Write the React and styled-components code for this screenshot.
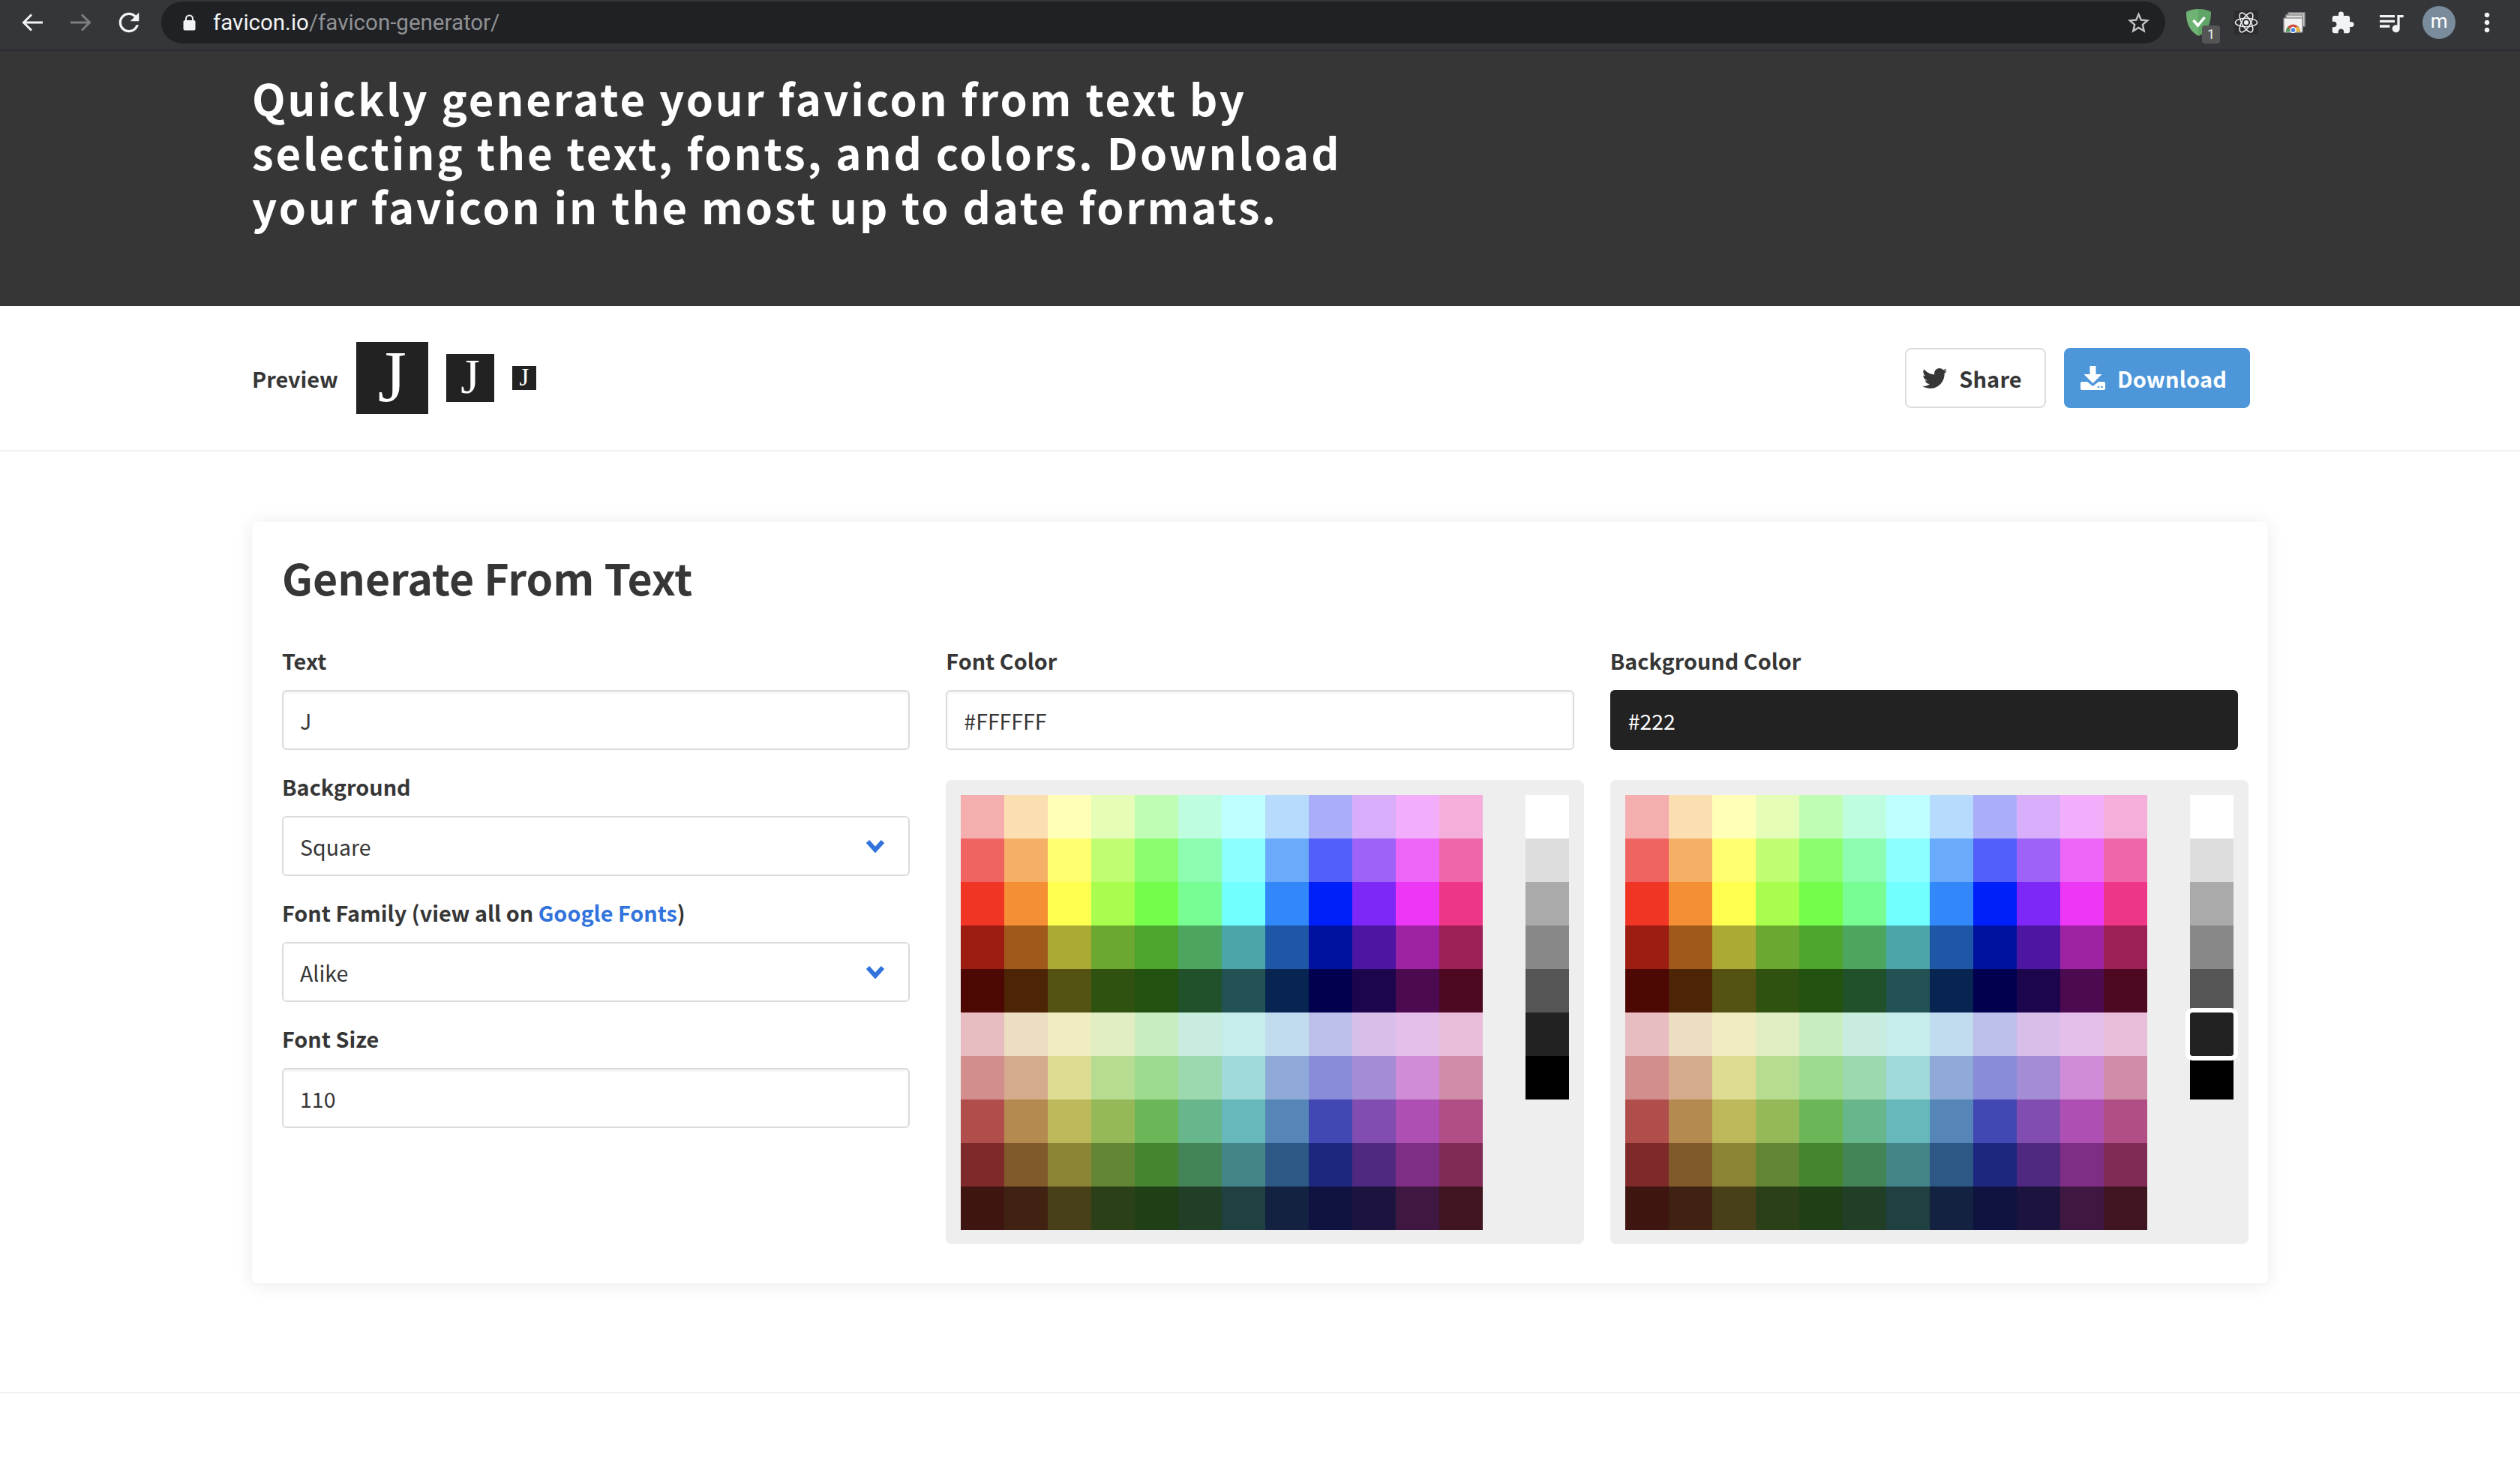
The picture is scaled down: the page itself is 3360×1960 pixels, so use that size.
import styled, { createGlobalStyle } from 'styled-components';
import { FaTwitter } from 'react-icons/fa';
import { MdExtension, MdQueueMusic, MdMoreVert, MdRefresh, MdStarBorder } from 'react-icons/md';

const GlobalStyle = createGlobalStyle`
  html, body {
    margin: 0;
    padding: 0;
    background: #fff;
  }
  body {
    font-family: "Noto Sans CJK JP", "Noto Sans", sans-serif;
    color: #363636;
  }
  * {
    box-sizing: border-box;
  }
`;

const PALETTE = [
  ['#f4aeae', '#fbdfb1', '#ffffb8', '#e6fdb8', '#c0fdb4', '#bffde0', '#bfffff', '#b6dbfd', '#aaaef9', '#d8aefb', '#f3aefb', '#f5aeda'],
  ['#ef6461', '#f5af67', '#ffff70', '#c0fd72', '#8cfd6f', '#8cfdb0', '#8cffff', '#69aafa', '#525ffa', '#9e62f7', '#ee66f7', '#ef66aa'],
  ['#f03524', '#f48f35', '#ffff4f', '#a8fd4f', '#75fd4b', '#78fd95', '#72ffff', '#3287f9', '#0020fa', '#7d28f7', '#ec37f5', '#ee3689'],
  ['#9c1c12', '#a1581d', '#aaaa34', '#6ca731', '#4ea52d', '#4ca660', '#4ba6a8', '#1e57a6', '#00119f', '#4c16a2', '#9d23a2', '#9c2056'],
  ['#4d0804', '#4d2506', '#555314', '#305211', '#225110', '#21512a', '#225253', '#082450', '#00004f', '#1c054d', '#4c0b50', '#4d0922'],
  ['#e8bdc1', '#ecdec1', '#f0edc2', '#e1eec3', '#c7edc1', '#c8ede0', '#c7ecec', '#c2dcef', '#bcbfe9', '#d8bfe9', '#e4bfe9', '#e7bdda'],
  ['#d28d8d', '#d6aa8d', '#dedc92', '#b6dc91', '#9ddb8e', '#9dd9ae', '#a0dadb', '#8faad9', '#888cd9', '#a48cd6', '#d08cd6', '#d08daa'],
  ['#b04e4b', '#b48a50', '#bdb95a', '#95b958', '#6bb757', '#68b78c', '#66b8bb', '#5586b7', '#4248b3', '#814db0', '#ae50b3', '#b04e85'],
  ['#7f2a2a', '#82592b', '#8b8635', '#628634', '#458532', '#448558', '#448587', '#2d5785', '#1c2880', '#502880', '#7f2e85', '#7e2c55'],
  ['#3f1512', '#402213', '#474018', '#2b4018', '#213f16', '#203f26', '#214041', '#132240', '#10123f', '#1c143f', '#3e1841', '#3f1520'],
];

const GRAYS = ['#ffffff', '#dddddd', '#aaaaaa', '#888888', '#555555', '#222222', '#000000'];

const Toolbar = styled.header`
  height: 68px;
  background: #35363a;
  border-bottom: 2px solid #2a2b2e;
  display: flex;
  align-items: center;
  padding-bottom: 6px;
  color: #f1f3f4;
`;

const NavGroup = styled.div`
  display: flex;
  padding-left: 11px;
  width: 215px;
  flex: none;
`;

const NavButton = styled.span`
  width: 64.5px;
  display: flex;
  justify-content: center;
  align-items: center;
  color: ${p => (p.$dim ? '#7d7e80' : '#f1f3f4')};
  flex: none;
`;

const UrlBar = styled.div`
  width: 2672px;
  height: 56px;
  flex: none;
  border-radius: 28px;
  background: #202124;
  display: flex;
  align-items: center;
  padding: 0 18px 0 29px;
  font-size: 29.5px;
  font-family: "Roboto", sans-serif;
`;

const UrlHost = styled.span`
  color: #f1f3f4;
  margin-left: 23px;
`;

const UrlPath = styled.span`
  color: #8f9194;
  flex: 1;
`;

const ExtensionTray = styled.div`
  flex: 1;
  display: flex;
  align-items: center;
  padding-left: 12px;
`;

const ExtSlot = styled.span`
  width: 64.2px;
  flex: none;
  height: 60px;
  display: flex;
  align-items: center;
  justify-content: center;
  position: relative;
  color: #f1f3f4;
`;

const Badge = styled.span`
  position: absolute;
  left: 37px;
  top: 34px;
  width: 24px;
  height: 24px;
  border-radius: 4px;
  background: #555;
  color: #eee;
  font: 18px/24px "Roboto", sans-serif;
  text-align: center;
`;

const Avatar = styled.span`
  width: 44px;
  height: 44px;
  border-radius: 50%;
  background: #7a8c9b;
  color: #fff;
  font: 26px/40px "Roboto", sans-serif;
  text-align: center;
`;

const Hero = styled.section`
  height: 340px;
  background: #363636;
  padding: 26px 336px 0;
`;

const Headline = styled.h1`
  width: 1500px;
  margin: 0;
  color: #fff;
  font-size: 58px;
  line-height: 72px;
  font-weight: 700;
  letter-spacing: 2.85px;
`;

const PreviewBar = styled.section`
  height: 194px;
  border-bottom: 2px solid #f1f1f1;
  display: flex;
  align-items: center;
  padding: 0 360px 0 336px;
`;

const PreviewLabel = styled.span`
  font-size: 28.8px;
  font-weight: 700;
  margin-right: 24px;
`;

const PreviewIcon = styled.span`
  width: ${p => p.$size}px;
  height: ${p => p.$size}px;
  margin-right: 24px;
  background: #222;
  color: #fff;
  font-family: "Liberation Serif", serif;
  font-size: ${p => p.$size * 1.02}px;
  line-height: ${p => p.$size * 0.96}px;
  text-align: center;
  flex: none;
`;

const Spacer = styled.div`
  flex: 1;
`;

const Button = styled.button`
  height: 80px;
  width: ${p => p.$width}px;
  margin-left: 24px;
  padding: 0 9px 0 0;
  display: flex;
  align-items: center;
  justify-content: center;
  gap: 16px;
  border-radius: 8px;
  font-family: inherit;
  font-size: 29px;
  font-weight: 700;
  letter-spacing: 0.15px;
  color: ${p => (p.$primary ? '#fff' : '#363636')};
  background: ${p => (p.$primary ? '#4d96d9' : '#fff')};
  border: 2px solid ${p => (p.$primary ? '#4d96d9' : '#ddd')};
`;

const Main = styled.main`
  padding: 94px 336px 0;
  height: 1256px;
  border-bottom: 2px solid #f1f1f1;
`;

const Card = styled.section`
  height: 1015px;
  border-radius: 8px;
  background: #fff;
  box-shadow: 0 2px 24px rgba(0, 0, 0, 0.09);
  padding: 40px;
`;

const CardTitle = styled.h2`
  margin: 0 0 59px;
  height: 66px;
  font-size: 57.2px;
  line-height: 66px;
  font-weight: 700;
`;

const Columns = styled.div`
  display: grid;
  grid-template-columns: repeat(3, minmax(0, 1fr));
  column-gap: 48px;
`;

const Field = styled.div`
  margin-bottom: 29px;
`;

const Label = styled.div`
  height: 40px;
  margin-bottom: 19px;
  font-size: 28.8px;
  line-height: 40px;
  font-weight: 700;
`;

const GoogleLink = styled.span`
  color: #3273dc;
`;

const Box = styled.div`
  height: 80px;
  border-radius: 6px;
  border: 2px solid ${p => (p.$bg ? p.$bg : '#dbdbdb')};
  background: ${p => p.$bg || '#fff'};
  color: ${p => (p.$bg ? '#fff' : '#363636')};
  padding: 0 ${p => (p.$select ? '31px' : '22px')} 0 22px;
  display: flex;
  align-items: center;
  justify-content: space-between;
  font-size: 28.5px;
  box-shadow: ${p => (p.$select || p.$bg ? 'none' : 'inset 0 2px 3px rgba(10, 10, 10, 0.06)')};
`;

const Picker = styled.div`
  width: 851px;
  height: 619px;
  margin-top: 40px;
  padding: 20px;
  border-radius: 8px;
  background: #eee;
  display: flex;
  justify-content: space-between;
`;

const SwatchGrid = styled.div`
  display: grid;
  grid-template-columns: repeat(12, 58px);
  grid-auto-rows: 58px;
`;

const GrayColumn = styled.div`
  display: grid;
  grid-template-columns: 58px;
  grid-auto-rows: 58px;
`;

const Swatch = styled.div`
  background: ${p => p.$color};
  position: relative;
  ${p => (p.$selected ? `
    outline: 6px solid #fff;
    border-radius: 3px;
    z-index: 1;
  ` : '')}
`;

const ColorPicker = ({ selected }) => (
  <Picker>
    <SwatchGrid>
      {PALETTE.flat().map((color, i) => (
        <Swatch key={i} $color={color} />
      ))}
    </SwatchGrid>
    <GrayColumn>
      {GRAYS.map(color => (
        <Swatch key={color} $color={color} $selected={color === selected} />
      ))}
    </GrayColumn>
  </Picker>
);

const BackArrow = () => (
  <svg width="28" height="24" viewBox="0 0 28 24">
    <path d="M28 12H3M13 1.500L2.500 12 13 22.500" fill="none" stroke="currentColor" strokeWidth="3" />
  </svg>
);

const ForwardArrow = () => (
  <svg width="28" height="24" viewBox="0 0 28 24">
    <path d="M0 12h25M15 1.500L25.500 12 15 22.500" fill="none" stroke="currentColor" strokeWidth="3" />
  </svg>
);

const LockIcon = () => (
  <svg width="17" height="22" viewBox="0 0 17 22">
    <path d="M4 9V6a4.500 4.500 0 0 1 9 0v3" fill="none" stroke="#f1f3f4" strokeWidth="2" />
    <rect x="0.500" y="8" width="16" height="13.500" rx="2" fill="#f1f3f4" />
  </svg>
);

const AdGuardIcon = () => (
  <svg width="33" height="36" viewBox="0 0 33 36">
    <defs>
      <linearGradient id="guard" x1="0" x2="1" y1="0" y2="0">
        <stop offset="0.5" stopColor="#6fb474" />
        <stop offset="0.5" stopColor="#5fa565" />
      </linearGradient>
    </defs>
    <path d="M16.500 0C10 0 4.500 1.500 0 4c0 13 3 25 16.500 32C30 29 33 17 33 4 28.500 1.500 23 0 16.500 0z" fill="url(#guard)" />
    <path d="M9.500 15l6 7 9-11" fill="none" stroke="#fff" strokeWidth="3.500" />
  </svg>
);

const ReactIcon = () => (
  <svg width="32" height="32" viewBox="-16 -16 32 32" style={{ background: '#2c2c30' }}>
    <g fill="none" stroke="#f1f3f4" strokeWidth="1.500">
      <ellipse rx="14.500" ry="5.800" />
      <ellipse rx="14.500" ry="5.800" transform="rotate(60)" />
      <ellipse rx="14.500" ry="5.800" transform="rotate(120)" />
    </g>
    <circle r="3" fill="#f1f3f4" />
  </svg>
);

const WebStoreIcon = () => (
  <svg width="30" height="28" viewBox="0 0 30 28">
    <rect x="7" y="1" width="22" height="18" fill="#c9c9c9" stroke="#8f8f8f" strokeWidth="1.500" />
    <rect x="4" y="4" width="22" height="18" fill="#dedede" stroke="#8f8f8f" strokeWidth="1.500" />
    <rect x="1" y="8" width="25" height="19" rx="1" fill="#f2f2f2" stroke="#8f8f8f" strokeWidth="1.500" />
    <path d="M4 26a9.500 9.500 0 0 1 19 0z" fill="#cf4a3c" />
    <path d="M4 26a9.500 9.500 0 0 1 2.500-6.500l4 6.500z" fill="#4b9e58" />
    <path d="M14 26l4.500-7a9.500 9.500 0 0 1 4.500 7z" fill="#e5b93f" />
    <circle cx="13.500" cy="24" r="3.500" fill="#4a83e0" stroke="#fff" strokeWidth="1.300" />
  </svg>
);

const DownloadIcon = () => (
  <svg width="33" height="32" viewBox="0 0 33 32">
    <path d="M12.500 0h8v11h8L16.500 23 4.500 11h8z" fill="#fff" />
    <path d="M2 21h7l7.500 6 7.500-6h7a2 2 0 0 1 2 2v7a2 2 0 0 1-2 2H2a2 2 0 0 1-2-2v-7a2 2 0 0 1 2-2z" fill="#fff" />
    <circle cx="24" cy="28" r="1.300" fill="#4d96d9" />
    <circle cx="28.500" cy="28" r="1.300" fill="#4d96d9" />
  </svg>
);

const Chevron = () => (
  <svg width="26" height="18" viewBox="0 0 26 18">
    <path d="M3 3l10 11L23 3" fill="none" stroke="#3273dc" strokeWidth="6" />
  </svg>
);

const App = () => (
  <>
    <GlobalStyle />
    <Toolbar>
      <NavGroup>
        <NavButton><BackArrow /></NavButton>
        <NavButton $dim><ForwardArrow /></NavButton>
        <NavButton><MdRefresh size={40} /></NavButton>
      </NavGroup>
      <UrlBar>
        <LockIcon />
        <UrlHost>favicon.io</UrlHost>
        <UrlPath>/favicon-generator/</UrlPath>
        <MdStarBorder size={35} color="#c4c5c7" />
      </UrlBar>
      <ExtensionTray>
        <ExtSlot><AdGuardIcon /><Badge>1</Badge></ExtSlot>
        <ExtSlot><ReactIcon /></ExtSlot>
        <ExtSlot><WebStoreIcon /></ExtSlot>
        <ExtSlot><MdExtension size={33} /></ExtSlot>
        <ExtSlot><MdQueueMusic size={40} /></ExtSlot>
        <ExtSlot><Avatar>m</Avatar></ExtSlot>
        <ExtSlot><MdMoreVert size={40} /></ExtSlot>
      </ExtensionTray>
    </Toolbar>
    <Hero>
      <Headline>
        Quickly generate your favicon from text by selecting the text, fonts, and colors. Download your favicon in the most up to date formats.
      </Headline>
    </Hero>
    <PreviewBar>
      <PreviewLabel>Preview</PreviewLabel>
      <PreviewIcon $size={96}>J</PreviewIcon>
      <PreviewIcon $size={64}>J</PreviewIcon>
      <PreviewIcon $size={32}>J</PreviewIcon>
      <Spacer />
      <Button $width={188}><FaTwitter size={33} />Share</Button>
      <Button $width={248} $primary><DownloadIcon />Download</Button>
    </PreviewBar>
    <Main>
      <Card>
        <CardTitle>Generate From Text</CardTitle>
        <Columns>
          <div>
            <Field>
              <Label>Text</Label>
              <Box>J</Box>
            </Field>
            <Field>
              <Label>Background</Label>
              <Box $select>Square<Chevron /></Box>
            </Field>
            <Field>
              <Label>Font Family (view all on <GoogleLink>Google Fonts</GoogleLink>)</Label>
              <Box $select>Alike<Chevron /></Box>
            </Field>
            <Field>
              <Label>Font Size</Label>
              <Box>110</Box>
            </Field>
          </div>
          <div>
            <Label>Font Color</Label>
            <Box>#FFFFFF</Box>
            <ColorPicker />
          </div>
          <div>
            <Label>Background Color</Label>
            <Box $bg="#222">#222</Box>
            <ColorPicker selected="#222222" />
          </div>
        </Columns>
      </Card>
    </Main>
  </>
);

export default App;
